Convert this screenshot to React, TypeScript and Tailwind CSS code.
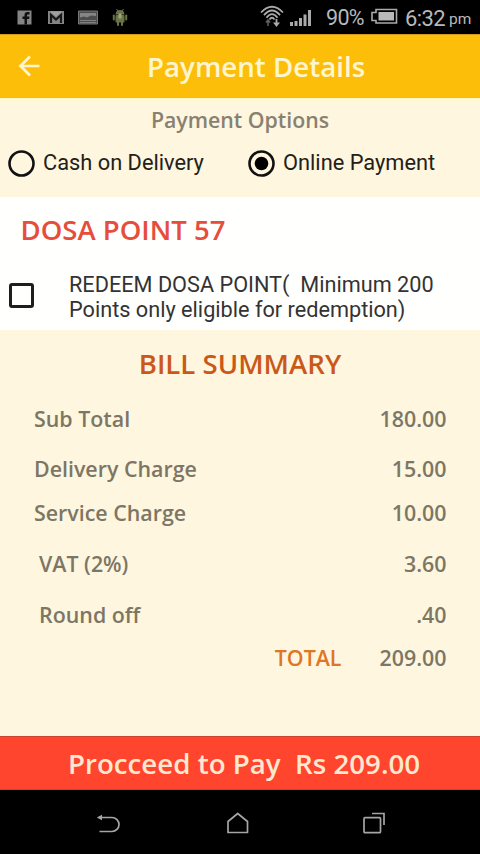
import React from 'react';

interface BillRow {
  label: string;
  amount: string;
  className: string;
}

const billRows: BillRow[] = [
  { label: 'Sub Total', amount: '180.00', className: 'pl-[34px]' },
  { label: 'Delivery Charge', amount: '15.00', className: 'mt-[22px] pl-[34px]' },
  { label: 'Service Charge', amount: '10.00', className: 'mt-4 pl-[34px]' },
  { label: 'VAT (2%)', amount: '3.60', className: 'mt-[23px] pl-[39px]' },
  { label: 'Round off', amount: '.40', className: 'mt-[23px] pl-[39px]' },
];

function StatusBar() {
  return (
    <div className="flex h-[34px] items-center bg-black font-[Roboto,sans-serif] font-normal text-[#b9b9b9]">
      <svg className="ml-[17px] shrink-0" width="15" height="15" viewBox="0 0 15 15">
        <path d="M0.500 0.500h14v14H0.500z" fill="#858585" />
        <path d="M7.500 14.500V9H5.500V6.500h2V5c0-2 1-3 3-3h2v2.500H11c-.7 0-1 .3-1 1v1h2.500L12.100 9H10v5.500z" fill="#101010" />
      </svg>
      <svg className="ml-[15px] shrink-0" width="18" height="15" viewBox="0 0 18 15">
        <path d="M1 1h16v13H1z" fill="#858585" />
        <path d="M4 13V5L9 9.500 14 5v8" fill="none" stroke="#181818" strokeWidth="2.200" />
        <path d="M3 1.500h12L9 6.500z" fill="#a2a2a2" />
      </svg>
      <svg className="ml-[13px] shrink-0" width="20" height="15" viewBox="0 0 20 15">
        <path d="M0.500 1h19v13h-19z" fill="#4c4c4c" stroke="#777" />
        <path d="M2 3h16v3l-5-.5-4 2-3-1-4 1z" fill="#858585" />
        <path d="M2 10.500h16M2 12.500h16" stroke="#808080" />
      </svg>
      <svg className="ml-[14px] shrink-0" width="16" height="19" viewBox="0 0 16 19">
        <g fill="#697344">
          <path d="M3.500 6.500a4.500 4.500 0 0 1 9 0z" />
          <rect x="3.500" y="7" width="9" height="7.500" rx="1" />
          <rect x="0.800" y="6.500" width="2" height="6" rx="1" />
          <rect x="13.200" y="6.500" width="2" height="6" rx="1" />
          <rect x="5" y="13" width="2" height="5" rx="1" />
          <rect x="9" y="13" width="2" height="5" rx="1" />
        </g>
        <path d="M4.500 1l1.500 2M11.500 1L10 3" stroke="#697344" />
        <path d="M6.500 5.500h3v5h-3z" fill="#9ba584" />
      </svg>
      <svg className="ml-[132px] mt-[-3px] shrink-0" width="24" height="24" viewBox="0 0 24 24" fill="none" stroke="#aaa" strokeWidth="1.800">
        <path d="M1 8.500Q12-3 23 8.500M4 11.200Q12 1.800 20 11.200M6.500 13.800Q12 6.500 17.500 13.800M9.500 15.500Q12 12 14.500 15.500" />
        <path d="M8 16v6M6 18.500l2-2.500 2 2.500" stroke="#626262" strokeWidth="1.500" />
        <path d="M16.500 15v5" />
        <path d="M13 18.500h7L16.500 23z" fill="#aaa" stroke="none" />
      </svg>
      <svg className="ml-[5px] mt-px shrink-0" width="23" height="18" viewBox="0 0 23 18" fill="#aaa">
        <path d="M1 13h3v4H1zM5.500 12h3v5h-3zM10 9h3v8h-3zM14.500 5.500h3V17h-3zM19 1h3v16h-3z" />
      </svg>
      <span className="ml-[14px] mt-[2px] w-[39px] whitespace-nowrap text-[21.500px] tracking-[-0.7px]">90%</span>
      <svg className="ml-[5px] mt-[-2px] shrink-0" width="28" height="17" viewBox="0 0 28 17">
        <path d="M6 1.500h20.500v13.500H6v-2.500H2v-8h4z" fill="none" stroke="#aaa" strokeWidth="1.600" />
        <path d="M8.500 4H24v8.500H8.500z" fill="#b9b9b9" />
      </svg>
      <span className="ml-[7px] mt-[2px] w-[40px] whitespace-nowrap text-[22px] tracking-[-0.6px]">6:32</span>
      <span className="ml-[4px] mt-[6px] text-[15.500px]">pm</span>
    </div>
  );
}

function PaymentOption({ label, checked }: { label: string; checked?: boolean }) {
  return (
    <label className="flex w-[240px] items-center pl-2">
      <svg width="27" height="27" viewBox="0 0 27 27" fill="none" className="shrink-0">
        <circle cx="13.500" cy="13.500" r="12" stroke="#111" strokeWidth="2.600" />
        {checked && <circle cx="13.500" cy="13.500" r="6.800" fill="#000" />}
      </svg>
      <span className="ml-[8px] whitespace-nowrap font-[Roboto,sans-serif] text-[21.800px] font-normal text-[#242018]">{label}</span>
    </label>
  );
}

function NavBar() {
  return (
    <div className="flex h-16 items-center bg-black pt-1">
      <svg className="ml-[96px]" width="25" height="22" viewBox="0 0 25 22" fill="none" stroke="#a5a5a5" strokeWidth="1.700">
        <path d="M3 4.500h13a7 7 0 0 1 0 14H3.500" />
        <path d="M0.800 4.500L6 1.700v5.600z" fill="#a5a5a5" stroke="none" />
      </svg>
      <svg className="ml-[105px]" width="24" height="24" viewBox="0 0 24 24" fill="none" stroke="#a5a5a5" strokeWidth="1.700" strokeLinejoin="round">
        <path d="M2 9.500L11.700 1.500 21.500 9.500V20.500H2z" />
      </svg>
      <svg className="ml-[112px]" width="24" height="24" viewBox="0 0 24 24" fill="none" stroke="#a5a5a5" strokeWidth="1.700">
        <rect x="2" y="5.700" width="16.500" height="15" rx="1" />
        <path d="M10 1.500h12v11.500" />
      </svg>
    </div>
  );
}

export default function App() {
  return (
    <div className="h-[854px] w-[480px] overflow-hidden bg-[#fef6df] font-['Open_Sans',sans-serif] font-semibold">
      <StatusBar />

      <header className="flex h-16 items-center border-y border-t-[#d59b18] border-b-[#e8b735] bg-[#fdbe09]">
        <svg className="ml-[18px] shrink-0" width="24" height="24" viewBox="0 0 24 24" fill="none" stroke="#fff6cf" strokeWidth="2.700">
          <path d="M21.500 12H3M12 2.500L2.500 12l9.500 9.500" />
        </svg>
        <h1 className="ml-[105px] whitespace-nowrap pt-px text-[27.700px] text-[#fff6cf]">Payment Details</h1>
      </header>

      <section className="h-[99px] border-t-4 border-[#fff9cb]">
        <h2 className="mt-1 text-center text-[21.300px] leading-[28px] text-[#888171]">Payment Options</h2>
        <div className="mt-[13px] flex">
          <PaymentOption label="Cash on Delivery" />
          <PaymentOption label="Online Payment" checked />
        </div>
      </section>

      <section className="h-[133px] bg-[#fffffe]">
        <h2 className="pl-[20.500px] pt-[13px] text-[27.500px] leading-[40px] text-[#e64d3b]">DOSA POINT 57</h2>
        <label className="mt-[22px] flex items-center">
          <span className="mb-1 ml-[9px] h-[25px] w-[25px] shrink-0 rounded-[3px] border-3 border-[#1e1e1e]" />
          <span className="ml-[35px] whitespace-pre font-[Roboto,sans-serif] text-[21.700px] font-normal leading-[25px] text-[#333]">
            {'REDEEM DOSA POINT(  Minimum 200\nPoints only eligible for redemption)'}
          </span>
        </label>
      </section>

      <section className="h-[406px] pt-[14px]">
        <h2 className="text-center text-[27.600px] leading-[38px] text-[#cb5819]">BILL SUMMARY</h2>
        <div className="mt-[23px] text-[21.400px] leading-[28px] text-[#7d7665]">
          {billRows.map((row) => (
            <div key={row.label} className={`flex justify-between pr-[33.500px] ${row.className}`}>
              <span>{row.label}</span>
              <span>{row.amount}</span>
            </div>
          ))}
          <div className="mt-[15px] flex justify-end pr-[33.500px]">
            <span className="text-[#df7526]">TOTAL</span>
            <span className="w-[105px] text-right">209.00</span>
          </div>
        </div>
      </section>

      <button className="flex h-[54px] w-full items-center whitespace-pre border-y border-[#cb4430] bg-[#ff452d] pl-[68px] pt-px text-[27.700px] text-[#ffe8d0]">
        {'Procceed to Pay  Rs 209.00'}
      </button>

      <NavBar />
    </div>
  );
}
